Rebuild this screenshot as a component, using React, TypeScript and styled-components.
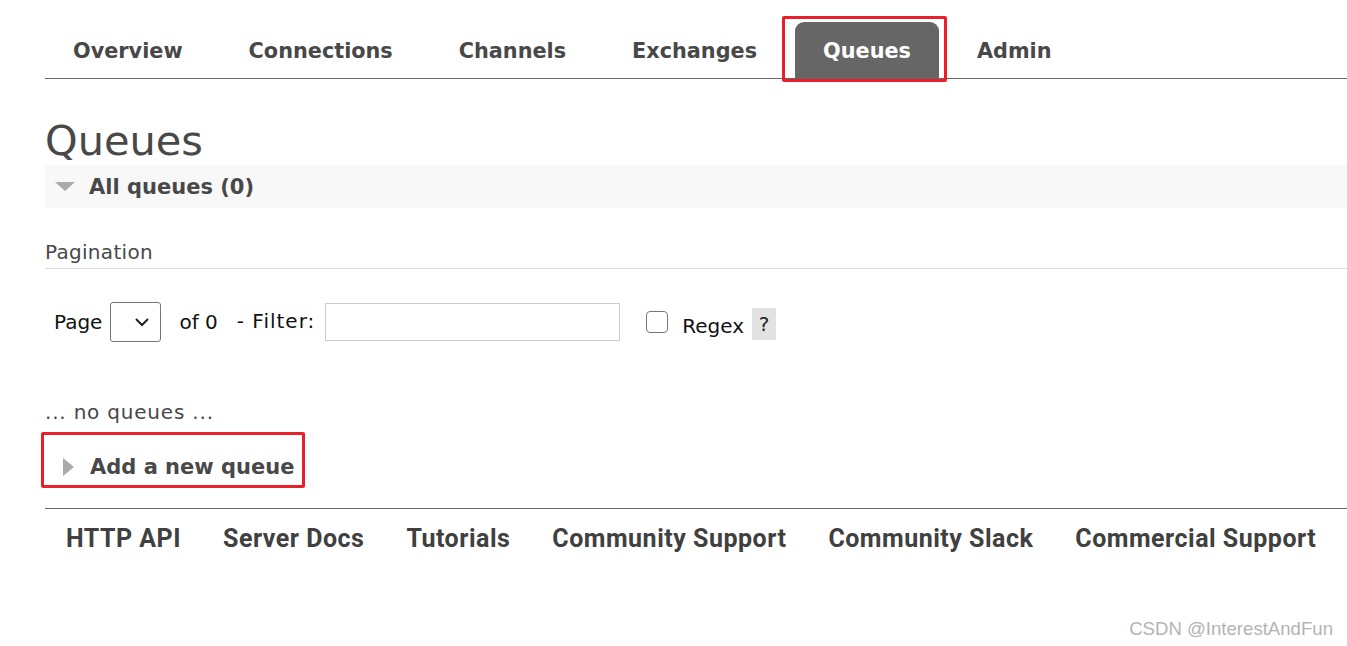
import styled, { createGlobalStyle } from "styled-components";

const GlobalStyle = createGlobalStyle`
  html, body {
    margin: 0;
    padding: 0;
    background: #fff;
  }
  body {
    font-family: "DejaVu Sans", Verdana, sans-serif;
    color: #484848;
    width: 1347px;
    height: 646px;
    overflow: hidden;
  }
`;

const tabs = ["Overview", "Connections", "Channels", "Exchanges", "Queues", "Admin"];
const footerLinks = [
  "HTTP API",
  "Server Docs",
  "Tutorials",
  "Community Support",
  "Community Slack",
  "Commercial Support",
];

const App = () => {
  return (
    <Page>
      <GlobalStyle />
      <Nav>
        {tabs.map((t) =>
          t === "Queues" ? (
            <Highlight key={t} $l={-13} $r={-8} $t={-6} $b={-4}>
              <Tab $active>{t}</Tab>
            </Highlight>
          ) : (
            <Tab key={t}>{t}</Tab>
          )
        )}
      </Nav>

      <Title>Queues</Title>
      <SectionBar>
        <DownArrow />
        All queues (0)
      </SectionBar>

      <SubHeading>Pagination</SubHeading>
      <PagerRow>
        <Label>Page</Label>
        <Select>
          <svg width="16" height="10" viewBox="0 0 16 10">
            <polyline points="2,2 8,8 14,2" fill="none" stroke="#222" strokeWidth="2" />
          </svg>
        </Select>
        <Label $ml={18}>of 0</Label>
        <Label $ml={19} $mt={-3} $spacing={1}>- Filter:</Label>
        <FilterInput />
        <Checkbox />
        <Label $ml={14} $mt={8}>Regex</Label>
        <HelpBox>?</HelpBox>
      </PagerRow>

      <EmptyNote>... no queues ...</EmptyNote>

      <AddWrap>
        <Highlight $l={-4} $r={-1} $t={-13} $b={0}>
          <AddHeader>
            <RightArrow />
            Add a new queue
          </AddHeader>
        </Highlight>
      </AddWrap>

      <Footer>
        {footerLinks.map((l) => (
          <FooterLink key={l}>{l}</FooterLink>
        ))}
      </Footer>

      <Watermark>CSDN @InterestAndFun</Watermark>
    </Page>
  );
};

export default App;

const Page = styled.div`
  position: relative;
  width: 1347px;
  height: 646px;
  padding-left: 45px;
  box-sizing: border-box;
`;

const Nav = styled.div`
  display: flex;
  align-items: flex-end;
  gap: 10px;
  padding-top: 22px;
  border-bottom: 1px solid #666;
`;

const Tab = styled.div<{ $active?: boolean }>`
  height: 56px;
  line-height: 58px;
  padding: 0 28px;
  font-size: 20.8px;
  font-weight: bold;
  border-radius: 9px 9px 0 0;
  color: ${(p) => (p.$active ? "#fff" : "#484848")};
  background: ${(p) => (p.$active ? "#666" : "transparent")};
`;

/* red annotation frame drawn over a part of the page */
const Highlight = styled.div<{ $l: number; $r: number; $t: number; $b: number }>`
  position: relative;
  display: inline-flex;

  &::after {
    content: "";
    position: absolute;
    left: ${(p) => p.$l}px;
    right: ${(p) => p.$r}px;
    top: ${(p) => p.$t}px;
    bottom: ${(p) => p.$b}px;
    border: 3px solid #e8202b;
    border-radius: 2px;
    pointer-events: none;
  }
`;

const Title = styled.h1`
  margin: 38px 0 0;
  font-size: 41.5px;
  font-weight: normal;
  line-height: 48px;
  color: #484848;
`;

const SectionBar = styled.div`
  display: flex;
  align-items: center;
  height: 43px;
  background: #f8f8f8;
  font-size: 21px;
  font-weight: bold;
  color: #484848;
`;

const DownArrow = styled.span`
  width: 0;
  height: 0;
  margin: 0 14px 0 10px;
  border-left: 10px solid transparent;
  border-right: 10px solid transparent;
  border-top: 9px solid #aaa;
`;

const RightArrow = styled.span`
  width: 0;
  height: 0;
  margin: 0 16px 0 18px;
  border-top: 9px solid transparent;
  border-bottom: 9px solid transparent;
  border-left: 11px solid #aaa;
`;

const SubHeading = styled.div`
  margin-top: 32px;
  padding-bottom: 4px;
  font-size: 20px;
  line-height: 24px;
  letter-spacing: 0.3px;
  border-bottom: 1px solid #ddd;
  color: #484848;
`;

const PagerRow = styled.div`
  display: flex;
  align-items: center;
  height: 40px;
  margin-top: 33px;
  padding-left: 9px;
  font-size: 20px;
  color: #111;
`;

const Label = styled.span<{ $ml?: number; $mt?: number; $spacing?: number }>`
  line-height: 24px;
  margin-left: ${(p) => p.$ml ?? 0}px;
  letter-spacing: ${(p) => p.$spacing ?? 0}px;
  position: relative;
  top: ${(p) => (p.$mt ?? 0) / 2}px;
`;

const Select = styled.div`
  display: flex;
  align-items: center;
  justify-content: flex-end;
  width: 51px;
  height: 40px;
  margin-left: 8px;
  padding-right: 10px;
  box-sizing: border-box;
  border: 1px solid #767676;
  border-radius: 3px;
`;

const FilterInput = styled.div`
  width: 295px;
  height: 38px;
  margin-left: 10px;
  box-sizing: border-box;
  border: 1px solid #ccc;
  background: #fff;
`;

const Checkbox = styled.span`
  width: 22px;
  height: 22px;
  margin-left: 26px;
  box-sizing: border-box;
  border: 1.5px solid #767676;
  border-radius: 4px;
`;

const HelpBox = styled.span`
  display: flex;
  align-items: center;
  justify-content: center;
  width: 24px;
  height: 32px;
  margin-left: 8px;
  margin-top: 4px;
  background: #e2e2e2;
  font-size: 20px;
  color: #222;
`;

const EmptyNote = styled.div`
  margin-top: 58px;
  font-size: 20px;
  line-height: 24px;
  letter-spacing: 0.8px;
  color: #484848;
`;

const AddWrap = styled.div`
  margin-top: 21px;
`;

const AddHeader = styled.div`
  display: flex;
  align-items: center;
  height: 43px;
  padding-right: 10px;
  font-size: 21px;
  font-weight: bold;
  color: #484848;
`;

const Footer = styled.div`
  display: flex;
  margin-top: 20px;
  border-top: 1px solid #666;
  padding-top: 14px;
`;

const FooterLink = styled.span`
  padding: 0 21px;
  font-family: Roboto, "Liberation Sans", sans-serif;
  font-weight: bold;
  font-size: 25px;
  letter-spacing: 0.5px;
  line-height: 32px;
  color: #404040;
`;

const Watermark = styled.div`
  position: absolute;
  right: 14px;
  bottom: 6px;
  font-family: "Liberation Sans", Arial, sans-serif;
  font-size: 18.6px;
  color: #b4b4b4;
`;
